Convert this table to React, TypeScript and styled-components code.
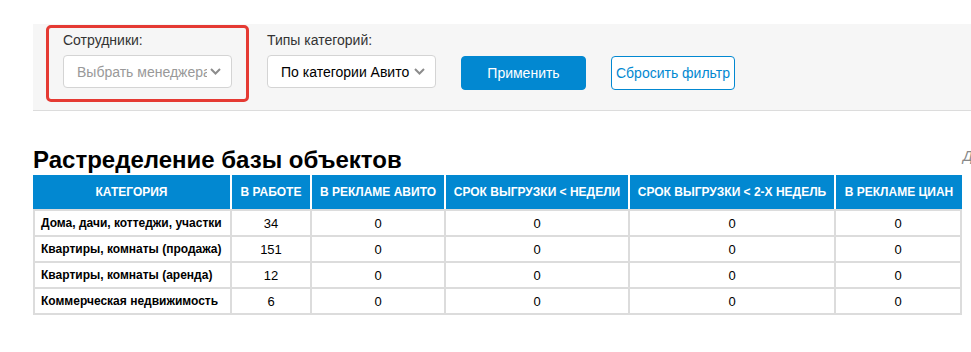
import styled, { createGlobalStyle } from 'styled-components';

const GlobalStyle = createGlobalStyle`
  * { box-sizing: border-box; }
  html, body {
    margin: 0;
    padding: 0;
    background: #fff;
    overflow: hidden;
  }
  body {
    font-family: "Liberation Sans", Arial, sans-serif;
    color: #000;
  }
`;

const Page = styled.div`
  padding: 24px 0 0 33px;
  width: 971px;
`;

const FilterPanel = styled.div`
  display: flex;
  align-items: flex-start;
  height: 87px;
  padding: 1px 0 0 13px;
  background: #f6f6f6;
  border-bottom: 1px solid #dcdcdc;
`;

const FilterGroup = styled.div<{ $highlight?: boolean }>`
  display: flex;
  flex-direction: column;
  gap: 6px;
  padding: ${(p) => (p.$highlight ? '4px 14px 11px 14px' : '7px 0 0 0')};
  margin-right: ${(p) => (p.$highlight ? '18px' : '0')};
  border: ${(p) => (p.$highlight ? '3px solid #e53a33' : 'none')};
  border-radius: 5px;
`;

const Label = styled.label`
  font-size: 14px;
  line-height: 17px;
  color: #333;
`;

const Select = styled.div<{ $placeholder?: boolean }>`
  display: flex;
  align-items: center;
  width: 169px;
  height: 33px;
  padding: 0 10px 0 13px;
  background: #fff;
  border: 1px solid #d4d4d4;
  border-radius: 4px;
  font-size: 14px;
  color: ${(p) => (p.$placeholder ? '#999' : '#000')};
`;

const SelectText = styled.span`
  flex: 1;
  white-space: nowrap;
  overflow: hidden;
`;

const Chevron = () => (
  <svg width="11" height="7" viewBox="0 0 11 7" style={{ flexShrink: 0, marginLeft: 3 }}>
    <polyline points="1,1 5.5,5.5 10,1" fill="none" stroke="#8c8c8c" strokeWidth="2" />
  </svg>
);

const Button = styled.button<{ $outline?: boolean }>`
  margin: 31px 0 0 25px;
  width: ${(p) => (p.$outline ? '124px' : '125px')};
  height: 34px;
  padding: 0;
  font-family: "Liberation Sans", Arial, sans-serif;
  font-size: 14px;
  border-radius: 4px;
  cursor: pointer;
  background: ${(p) => (p.$outline ? '#fff' : '#0288d1')};
  color: ${(p) => (p.$outline ? '#0288d1' : '#fff')};
  border: 1px solid #0288d1;
`;

const TitleRow = styled.div`
  display: grid;
  grid-template-columns: 930px auto;
  align-items: start;
  margin-top: 37px;
  height: 27px;
`;

const Title = styled.h2`
  margin: 0;
  font-size: 24px;
  line-height: 24px;
  font-weight: 700;
`;

const Note = styled.a`
  margin-top: 0;
  font-size: 14px;
  font-style: italic;
  color: #888;
  white-space: nowrap;
`;

const Table = styled.table`
  width: 929px;
  table-layout: fixed;
  border-collapse: separate;
  border-spacing: 0;
`;

const Th = styled.th<{ $w: number }>`
  width: ${(p) => p.$w}px;
  height: 34px;
  padding: 0 4px;
  background: #0288d1;
  color: #fff;
  font-size: 12px;
  font-weight: 700;
  text-transform: uppercase;
  text-align: center;
  white-space: nowrap;
  border-right: 2px solid #fff;
  &:last-child { border-right: none; }
`;

const Td = styled.td<{ $label?: boolean }>`
  height: 26px;
  padding: 0 ${(p) => (p.$label ? '6px' : '4px')};
  font-size: ${(p) => (p.$label ? '12px' : '13px')};
  font-weight: ${(p) => (p.$label ? 700 : 400)};
  text-align: ${(p) => (p.$label ? 'left' : 'center')};
  white-space: nowrap;
  border-right: 2px solid #dcdcdc;
  border-bottom: 2px solid #dcdcdc;
  &:first-child { border-left: 2px solid #dcdcdc; }
  tr:first-child > & { border-top: 2px solid #dcdcdc; height: 28px; }
`;

const columns = [
  { title: 'Категория', w: 199 },
  { title: 'В работе', w: 80 },
  { title: 'В рекламе Авито', w: 134 },
  { title: 'Срок выгрузки < недели', w: 184 },
  { title: 'Срок выгрузки < 2-х недель', w: 206 },
  { title: 'В рекламе ЦИАН', w: 126 },
];

const rows: [string, number, number, number, number, number][] = [
  ['Дома, дачи, коттеджи, участки', 34, 0, 0, 0, 0],
  ['Квартиры, комнаты (продажа)', 151, 0, 0, 0, 0],
  ['Квартиры, комнаты (аренда)', 12, 0, 0, 0, 0],
  ['Коммерческая недвижимость', 6, 0, 0, 0, 0],
];

export default function App() {
  return (
    <>
      <GlobalStyle />
      <Page>
        <FilterPanel>
          <FilterGroup $highlight>
            <Label>Сотрудники:</Label>
            <Select $placeholder>
              <SelectText>Выбрать менеджера</SelectText>
              <Chevron />
            </Select>
          </FilterGroup>
          <FilterGroup>
            <Label>Типы категорий:</Label>
            <Select>
              <SelectText>По категории Авито</SelectText>
              <Chevron />
            </Select>
          </FilterGroup>
          <Button>Применить</Button>
          <Button $outline>Сбросить фильтр</Button>
        </FilterPanel>

        <TitleRow>
          <Title>Растределение базы объектов</Title>
          <Note>Детализация</Note>
        </TitleRow>

        <Table>
          <thead>
            <tr>
              {columns.map((c) => (
                <Th key={c.title} $w={c.w}>{c.title}</Th>
              ))}
            </tr>
          </thead>
          <tbody>
            {rows.map(([name, ...vals]) => (
              <tr key={name}>
                <Td $label>{name}</Td>
                {vals.map((v, i) => (
                  <Td key={i}>{v}</Td>
                ))}
              </tr>
            ))}
          </tbody>
        </Table>
      </Page>
    </>
  );
}
